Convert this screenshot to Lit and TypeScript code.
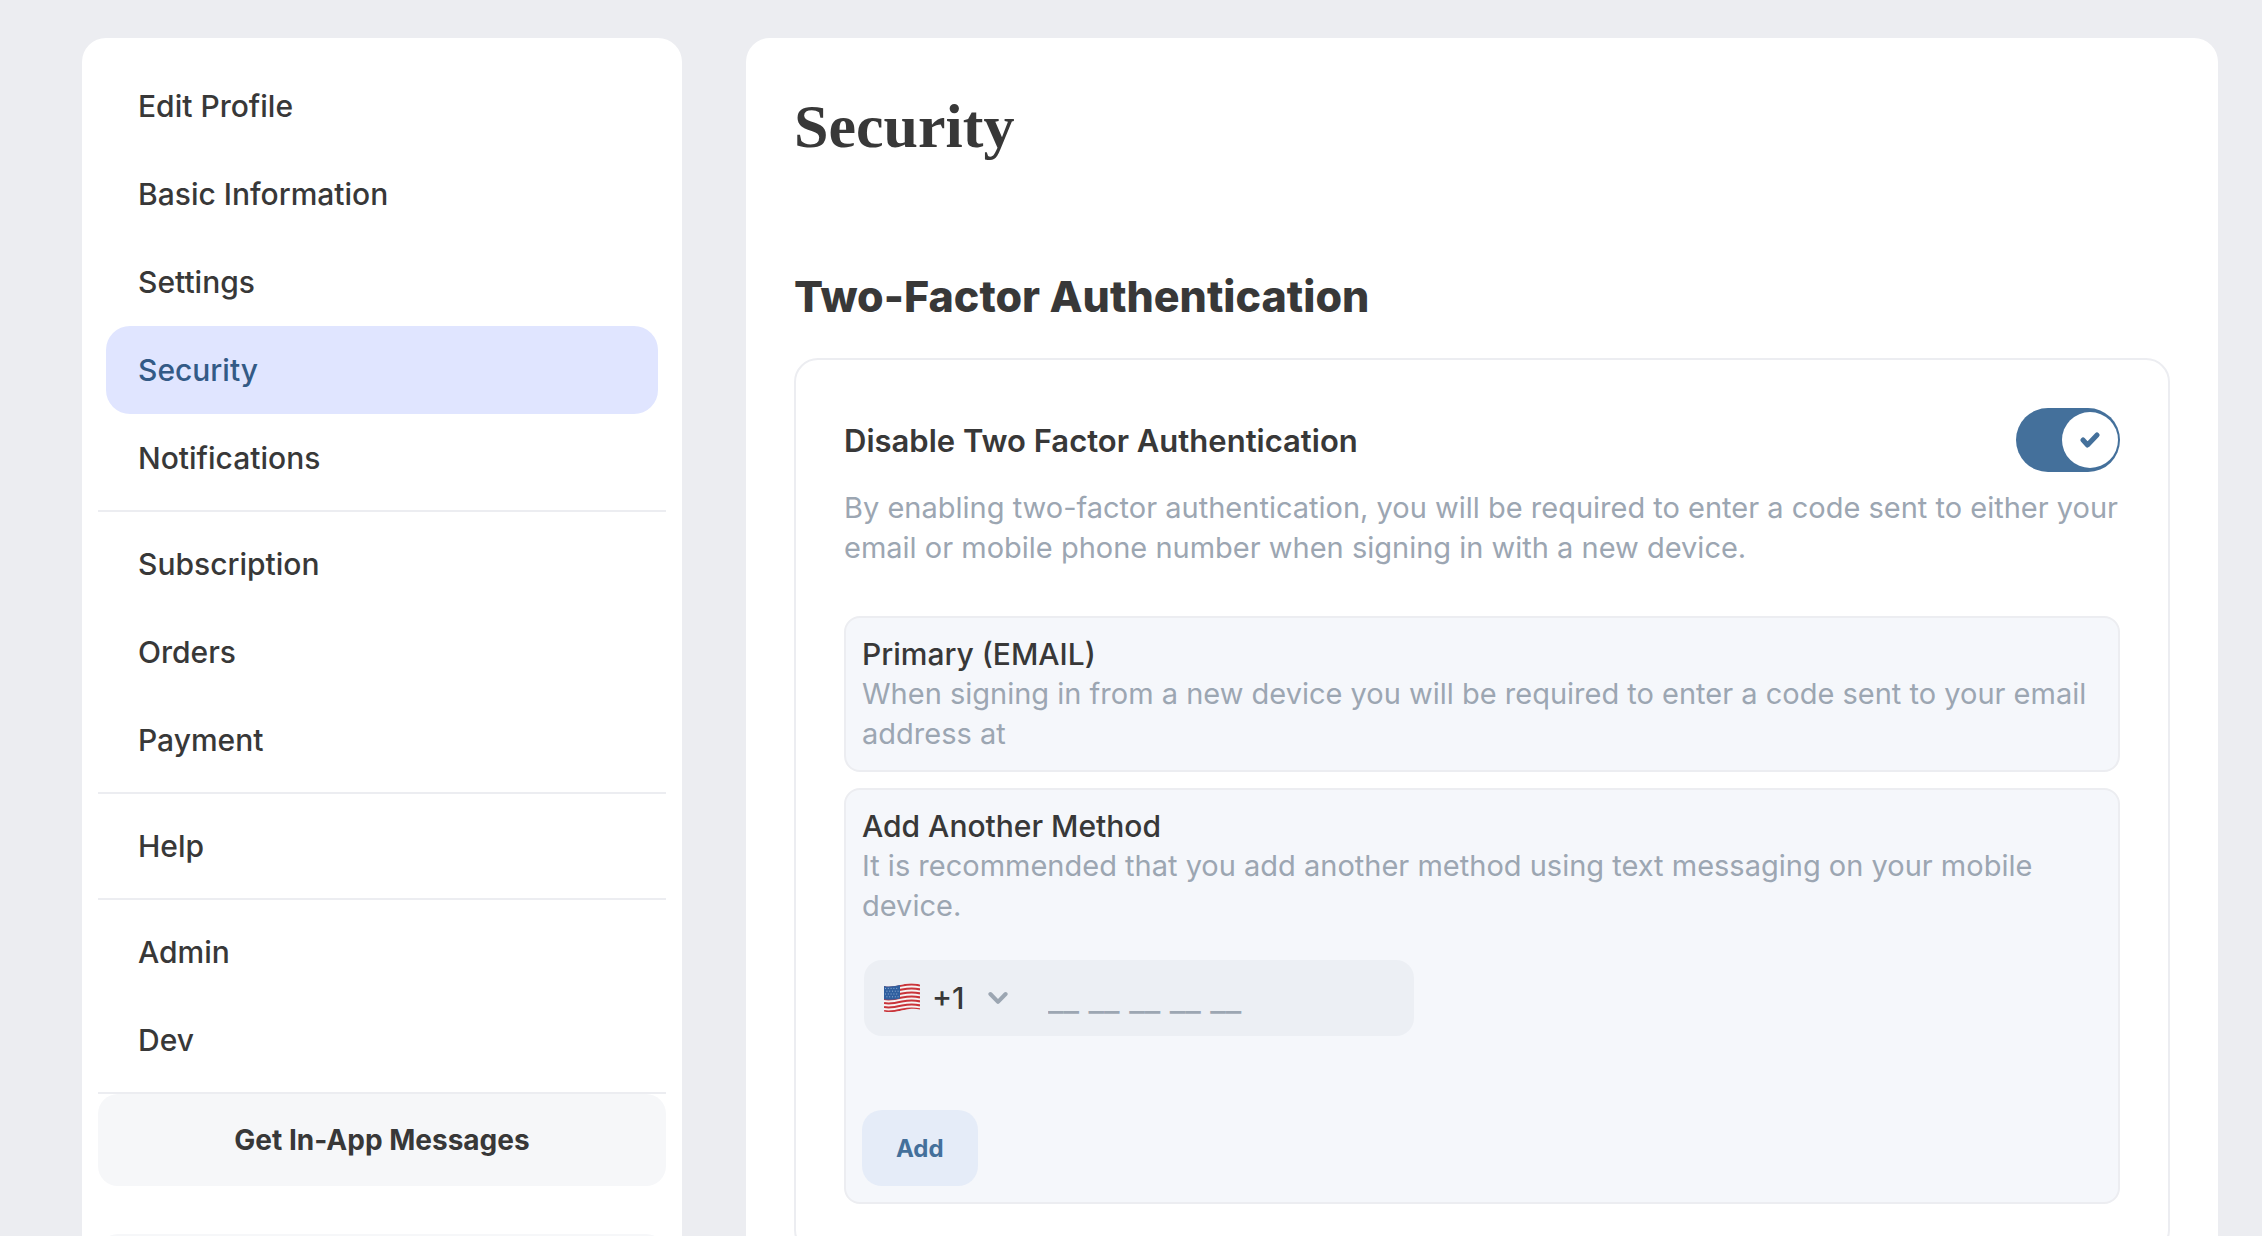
import { LitElement, html, css, svg } from "lit";
import { customElement, property, state } from "lit/decorators.js";
import { classMap } from "lit/directives/class-map.js";

const NAV_GROUPS: string[][] = [
  ["Edit Profile", "Basic Information", "Settings", "Security", "Notifications"],
  ["Subscription", "Orders", "Payment"],
  ["Help"],
  ["Admin", "Dev"],
];

@customElement("settings-nav")
export class SettingsNav extends LitElement {
  @property() current = "Security";

  static styles = css`
    :host {
      display: block;
      box-sizing: border-box;
      padding: 24px 16px;
      background: #ffffff;
      border-radius: 24px;
    }
    .group {
      margin: 0;
      padding: 0 8px 8px;
      list-style: none;
      border-bottom: 2px solid #ecedf1;
    }
    .group + .group {
      padding-top: 8px;
    }
    .item {
      display: flex;
      align-items: center;
      height: 88px;
      padding: 0 32px;
      border-radius: 24px;
      color: #383838;
      font-size: 30px;
      font-weight: 500;
      text-decoration: none;
    }
    .item.active {
      background: #e0e5ff;
      color: #335a86;
    }
    .actions {
      display: grid;
      gap: 48px;
    }
    .action {
      box-sizing: border-box;
      width: 100%;
      height: 92px;
      border: 0;
      border-radius: 20px;
      background: #f6f7f9;
      color: #383838;
      font-family: inherit;
      font-size: 28px;
      font-weight: 700;
    }
  `;

  render() {
    return html`
      <nav>
        ${NAV_GROUPS.map(
          (group) => html`<ul class="group">
            ${group.map(
              (label) => html`<li>
                <a
                  class=${classMap({ item: true, active: label === this.current })}
                  href="#"
                  >${label}</a
                >
              </li>`
            )}
          </ul>`
        )}
      </nav>
      <div class="actions">
        <button class="action" type="button">Get In-App Messages</button>
        <div class="action" aria-hidden="true"></div>
      </div>
    `;
  }
}

@customElement("toggle-switch")
export class ToggleSwitch extends LitElement {
  @property() label = "";
  @state() private on = true;

  static styles = css`
    .row {
      display: flex;
      align-items: center;
      justify-content: space-between;
      color: #383838;
      font-size: 31px;
      font-weight: 600;
    }
    .switch {
      display: grid;
      align-items: center;
      width: 104px;
      height: 64px;
    }
    .box,
    .knob {
      grid-area: 1 / 1;
    }
    .box {
      appearance: none;
      width: 100%;
      height: 100%;
      margin: 0;
      border-radius: 32px;
      background: #c4cbd4;
    }
    .box:checked {
      background: #44709b;
    }
    .knob {
      display: grid;
      place-items: center;
      justify-self: start;
      width: 56px;
      height: 56px;
      margin: 0 2px;
      border-radius: 50%;
      background: #ffffff;
      pointer-events: none;
    }
    .box:checked + .knob {
      justify-self: end;
    }
  `;

  render() {
    return html`<div class="row">
      <label for="toggle">${this.label}</label>
      <span class="switch">
        <input
          class="box"
          id="toggle"
          type="checkbox"
          .checked=${this.on}
          @change=${(e: Event) => (this.on = (e.target as HTMLInputElement).checked)}
        />
        <span class="knob">
          <svg width="20" height="16" viewBox="0 0 20 16" fill="none">
            <path
              d="M3 8 L7.5 13 L17 3"
              stroke="#44709b"
              stroke-width="5"
              stroke-linecap="round"
              stroke-linejoin="round"
            />
          </svg>
        </span>
      </span>
    </div>`;
  }
}

const wave = (y: number) =>
  `M0 ${y + 1} C5 ${y + 2.2} 11 ${y + 1.2} 18 ${y - 0.4} S30 ${y - 2} 36 ${y - 0.6}`;

const flag = svg`
  <clipPath id="cloth">
    <path d="M0 3 C5 4.2 11 3.2 18 1.6 S30 0 36 1.4 V26.4 C30 25 25 25.8 18 27.4 S5 29.8 0 28.4 Z" />
  </clipPath>
  <g clip-path="url(#cloth)">
    <rect width="36" height="30" fill="#f6f3f3" />
    ${[3, 7, 11, 15, 19, 23, 27].map(
      (y) => svg`<path d=${wave(y)} stroke="#c9343a" stroke-width="2.1" fill="none" />`
    )}
    <path d="M0 0 H16 V15.4 C11 16.6 5 17.2 0 16.2 Z" fill="#2f5f9f" />
    ${[5.4, 8.2, 11, 13.8].map(
      (y, row) => svg`<path
        d=${`M${row % 2 ? 2.4 : 1} ${y} H15`}
        stroke="#9db7da"
        stroke-width="0.9"
        stroke-dasharray="1 1.8"
      />`
    )}
  </g>
`;

@customElement("phone-field")
export class PhoneField extends LitElement {
  static styles = css`
    :host {
      display: block;
    }
    .field {
      display: flex;
      align-items: center;
      box-sizing: border-box;
      max-width: 550px;
      height: 76px;
      padding: 0 20px;
      border-radius: 18px;
      background: #eceff4;
    }
    .flag,
    .chevron {
      flex: none;
      pointer-events: none;
    }
    .code {
      appearance: none;
      width: 88px;
      height: 100%;
      margin: 0 -20px 0 0;
      padding: 0 0 0 12px;
      border: 0;
      background: transparent;
      color: #383838;
      font-family: inherit;
      font-size: 30px;
      font-weight: 500;
    }
    .number {
      flex: 1;
      min-width: 0;
      height: 100%;
      margin-left: 40px;
      padding: 0;
      border: 0;
      background: transparent;
      color: #383838;
      font-family: inherit;
      font-size: 34px;
    }
    .number::placeholder {
      color: #9ca6b2;
      opacity: 1;
    }
  `;

  render() {
    return html`<div class="field">
      <svg class="flag" width="36" height="30" viewBox="0 0 36 30">${flag}</svg>
      <select class="code" aria-label="Country code">
        <option>+1</option>
      </select>
      <svg class="chevron" width="20" height="14" viewBox="0 0 20 14" fill="none">
        <path
          d="M2.4 3 L10 10.8 L17.6 3"
          stroke="#9ca6b2"
          stroke-width="4"
          stroke-linecap="round"
          stroke-linejoin="round"
        />
      </svg>
      <input class="number" type="tel" aria-label="Phone number" placeholder="__ __ __ __ __" />
    </div>`;
  }
}

@customElement("app-root")
export class AppRoot extends LitElement {
  static styles = css`
    :host {
      display: block;
      min-height: 100vh;
      background: #ecedf1;
      color: #383838;
      font-family: Inter, "Liberation Sans", sans-serif;
    }
    .page {
      display: flex;
      gap: 64px;
      box-sizing: border-box;
      min-height: 100vh;
      padding: 38px 44px 38px 82px;
    }
    .side {
      flex: none;
      width: 600px;
    }
    .main {
      flex: 1;
      min-width: 0;
      box-sizing: border-box;
      padding: 48px;
      border-radius: 24px;
      background: #ffffff;
    }
    .title {
      margin: 0 0 100px;
      font-family: "Liberation Serif", serif;
      font-size: 62px;
      font-weight: 700;
      line-height: 80px;
    }
    .section {
      margin: 0 0 32px;
      font-size: 43px;
      font-weight: 800;
      line-height: 60px;
    }
    .card {
      padding: 48px;
      border: 2px solid #ecedf1;
      border-radius: 24px;
    }
    .text {
      margin: 0;
      color: #9ca6b2;
      font-size: 29px;
      line-height: 40px;
    }
    .intro {
      margin: 16px 0 48px;
    }
    .method {
      padding: 16px;
      border: 2px solid #ecedf1;
      border-radius: 16px;
      background: #f5f7fb;
    }
    .method + .method {
      margin-top: 16px;
    }
    .name {
      margin: 0;
      font-size: 30px;
      font-weight: 500;
      line-height: 40px;
    }
    .phone {
      margin: 34px 2px 74px;
    }
    .add {
      display: block;
      height: 76px;
      padding: 0 34px;
      border: 0;
      border-radius: 20px;
      background: #e5ecf8;
      color: #44709b;
      font-family: inherit;
      font-size: 24px;
      font-weight: 700;
    }
  `;

  render() {
    return html`<div class="page">
      <settings-nav class="side"></settings-nav>
      <main class="main">
        <h1 class="title">Security</h1>
        <h2 class="section">Two-Factor Authentication</h2>
        <section class="card">
          <toggle-switch label="Disable Two Factor Authentication"></toggle-switch>
          <p class="text intro">
            By enabling two-factor authentication, you will be required to enter a code sent to
            either your email or mobile phone number when signing in with a new device.
          </p>
          <div class="method">
            <h3 class="name">Primary (EMAIL)</h3>
            <p class="text">
              When signing in from a new device you will be required to enter a code sent to your
              email address at
            </p>
          </div>
          <div class="method">
            <h3 class="name">Add Another Method</h3>
            <p class="text">
              It is recommended that you add another method using text messaging on your mobile
              device.
            </p>
            <phone-field class="phone"></phone-field>
            <button class="add" type="button">Add</button>
          </div>
        </section>
      </main>
    </div>`;
  }
}
